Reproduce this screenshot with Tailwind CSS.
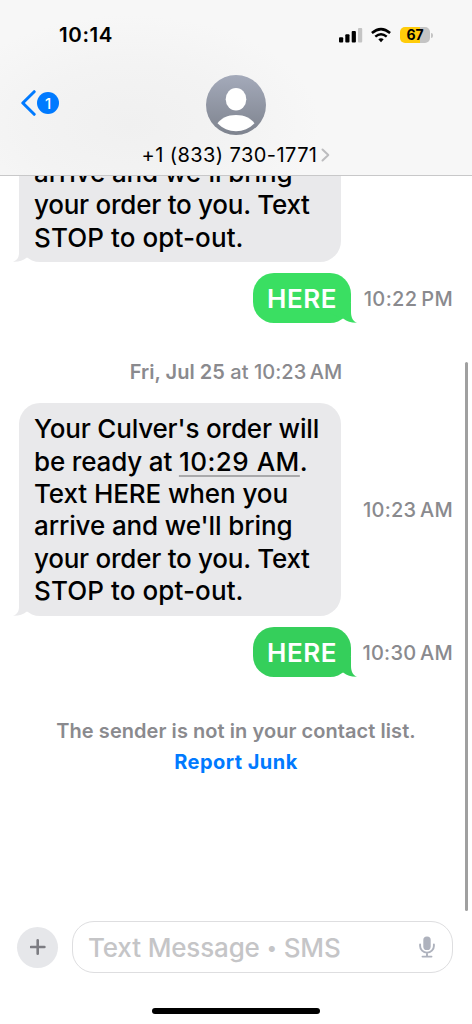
<!DOCTYPE html>
<html lang="en">
<head>
<meta charset="utf-8">
<title>Messages</title>
<script src="https://cdn.jsdelivr.net/npm/@tailwindcss/browser@4"></script>
</head>
<body class="bg-white">
<div class="relative flex h-[1024px] w-[472px] flex-col overflow-hidden bg-white font-['Inter','Liberation_Sans',sans-serif] text-black">

  <header class="flex h-[176px] shrink-0 flex-col border-b border-[#c8c8c9] bg-[radial-gradient(ellipse_190px_110px_at_130px_125px,#f0f0f0_0%,#f3f3f3_55%,#f7f7f7_100%)]">
    <div class="flex h-[70px] shrink-0 items-center justify-between pr-[39px] pl-[59px]">
      <span class="pt-px text-[20.5px] leading-none font-semibold tracking-[0.6px]">10:14</span>
      <div class="flex items-center">
        <svg class="h-4 w-6" viewBox="0 0 24 16"><rect x="0" y="10.3" width="4.2" height="5.2" rx="1"/><rect x="6.3" y="7.3" width="4.2" height="8.2" rx="1"/><rect x="12.7" y="4" width="4.2" height="11.5" rx="1"/><rect x="19" y="1" width="4.2" height="14.5" rx="1" fill="#c4c4c4"/></svg>
        <svg class="ml-2 h-4 w-5" viewBox="0 0 20 16" fill="none" stroke="#000" stroke-width="2.5"><path d="M.9 6Q10-1.8 19.1 6"/><path d="M4.3 9.6Q10 4.8 15.700 9.600"/><path d="M10 15.200 7.300 12.300Q10 10.200 12.700 12.300Z" fill="#000" stroke="none"/></svg>
        <div class="ml-[9px] flex h-4 w-[30px] items-center justify-center rounded-[5px] bg-[linear-gradient(90deg,#ffcc0a_67%,#c4c4c4_67%)] text-[14px] leading-none font-bold">67</div>
        <div class="ml-px h-[5px] w-[2px] rounded-r-full bg-[#c4c4c4]"></div>
      </div>
    </div>
    <div class="grid grid-cols-[1fr_60px_1fr] pt-[5px]">
      <div class="flex h-[56px] items-center pl-[21px]">
        <svg class="h-[26px] w-[15px]" viewBox="0 0 15 26" fill="none" stroke="#007aff" stroke-width="3" stroke-linecap="round" stroke-linejoin="round"><path d="M13.2 1.7 1.8 13 13.2 24.3"/></svg>
        <span class="ml-px flex size-[22px] items-center justify-center rounded-full bg-[#007aff] text-[15px] leading-none font-medium text-white">1</span>
      </div>
      <svg class="size-[60px]" viewBox="0 0 60 60"><defs><linearGradient id="av" x2="0" y2="1"><stop stop-color="#a4aaba"/><stop offset="1" stop-color="#7e838e"/></linearGradient></defs><circle cx="30" cy="30" r="30" fill="url(#av)"/><ellipse cx="30" cy="24.200" rx="10.300" ry="11.300" fill="#fff"/><path d="M11.500 48.300C15 43.500 21.500 40 30 40s15 3.500 18.500 8.300C43.500 53.500 37 56.200 30 56.200s-13.500-2.700-18.500-7.900Z" fill="#fff"/></svg>
    </div>
    <div class="flex h-[40px] items-center justify-center">
      <span class="text-[20px] leading-none tracking-[0.42px] whitespace-nowrap">+1 (833) 730-1771</span>
      <svg class="ml-[4px] h-[14px] w-[9px]" viewBox="0 0 9 14" fill="none" stroke="#bcbcbe" stroke-width="2" stroke-linecap="round" stroke-linejoin="round"><path d="m1.500 1.500 5.800 5.500-5.800 5.500"/></svg>
    </div>
  </header>

  <main class="flex h-[736px] shrink-0 flex-col overflow-hidden">
    <div class="relative -mt-[19px] ml-[19px] w-[321.5px] rounded-b-[21px] bg-[#e9e9eb] px-[15px] pb-[8px] text-[26px] leading-[32.4px] font-medium whitespace-nowrap">
      <svg class="absolute bottom-0 -left-[6px] h-5 w-[28px]" viewBox="0 0 28 20" fill="#e9e9eb"><path d="M6 0V11C6 15.500 4 18.500 0 19.700 5.500 20 10 18.500 13.500 15.700L28 10V0Z"/></svg>
      <div class="relative tracking-[-0.12px]">arrive and we'll bring</div>
      <div class="relative tracking-[-0.25px]">your order to you. Text</div>
      <div class="relative tracking-[0.1px]">STOP to opt-out.</div>
    </div>

    <div class="mt-[11px] flex h-[50px] items-center justify-end pr-[19px]">
      <div class="relative flex h-[50px] w-[98px] items-center justify-center rounded-[21px] bg-[#3adf62] pt-px text-[26px] leading-none font-semibold tracking-[0.5px] text-white">
        <svg class="absolute -right-[6px] bottom-0 h-5 w-[28px]" viewBox="0 0 28 20" fill="#3adf62"><path d="M22 0V9C22 14.500 24 18.500 28 19.800 22.500 20 18 18.500 14.500 15.700L0 10V0Z"/></svg>
        <span class="relative">HERE</span>
      </div>
      <div class="w-[102px] pt-[1px] text-right text-[20px] leading-none font-medium tracking-[0.35px] whitespace-nowrap text-[#8a8a8e]">10:22&#8201;PM</div>
    </div>

    <div class="mt-[37px] text-center text-[20px] leading-[24px] font-medium tracking-[0.04px] whitespace-nowrap text-[#8a8a8e]"><span class="font-semibold">Fri, Jul 25</span> at 10:23&#8201;AM</div>

    <div class="mt-[19px] flex items-center justify-between pr-[19px] pl-[19px]">
      <div class="relative h-[213px] w-[321.5px] rounded-[21px] bg-[#e9e9eb] px-[15px] pt-[10px] text-[26px] leading-[32.400px] font-medium whitespace-nowrap">
        <svg class="absolute bottom-0 -left-[6px] h-5 w-[28px]" viewBox="0 0 28 20" fill="#e9e9eb"><path d="M6 0V11C6 15.500 4 18.500 0 19.700 5.500 20 10 18.500 13.500 15.700L28 10V0Z"/></svg>
        <div class="relative tracking-[-0.17px]">Your Culver's order will</div>
        <div class="relative tracking-[-0.16px]">be ready at <span class="tracking-[0.5px] underline decoration-[#a9a9ab] decoration-2 underline-offset-4">10:29 AM</span>.</div>
        <div class="relative tracking-[-0.1px]">Text HERE when you</div>
        <div class="relative tracking-[-0.12px]">arrive and we'll bring</div>
        <div class="relative tracking-[-0.25px]">your order to you. Text</div>
        <div class="relative tracking-[0.1px]">STOP to opt-out.</div>
      </div>
      <div class="text-[20px] leading-none font-medium tracking-[0.25px] whitespace-nowrap text-[#8a8a8e]">10:23&#8201;AM</div>
    </div>

    <div class="mt-[11px] flex h-[50px] items-center justify-end pr-[19px]">
      <div class="relative flex h-[50px] w-[98px] items-center justify-center rounded-[21px] bg-[#35cf5b] pt-px text-[26px] leading-none font-semibold tracking-[0.5px] text-white">
        <svg class="absolute -right-[6px] bottom-0 h-5 w-[28px]" viewBox="0 0 28 20" fill="#35cf5b"><path d="M22 0V9C22 14.500 24 18.500 28 19.800 22.500 20 18 18.500 14.500 15.700L0 10V0Z"/></svg>
        <span class="relative">HERE</span>
      </div>
      <div class="w-[102px] pt-[1px] text-right text-[20px] leading-none font-medium tracking-[0.25px] whitespace-nowrap text-[#8a8a8e]">10:30&#8201;AM</div>
    </div>

    <div class="mt-[39px] flex flex-col items-center text-[20px] leading-[31px] font-semibold whitespace-nowrap">
      <p class="tracking-[0.06px] text-[#8a8a8e]">The sender is not in your contact list.</p>
      <p class="font-bold tracking-[0.45px] text-[#007aff]">Report Junk</p>
    </div>
  </main>

  <div class="absolute top-[362px] left-[465px] h-[549px] w-[3px] rounded-full bg-[#a0a0a0]"></div>

  <footer class="flex grow flex-col items-center">
    <div class="flex w-full items-center pt-[9px] pr-[19px] pl-[17px]">
      <button class="flex size-[41px] items-center justify-center rounded-full bg-[#e6e7ea]"><svg class="size-4" viewBox="0 0 16 16" stroke="#7c7c82" stroke-width="2.600" stroke-linecap="round"><path d="M7.700 1.300v13.400M1 8h13.400"/></svg></button>
      <div class="ml-[14px] flex h-[52px] grow items-center justify-between rounded-[22px] border border-[#dedee0] pr-[17px] pl-[15px]">
        <span class="flex items-center pt-[2px] text-[26px] leading-none font-medium tracking-[-0.15px] whitespace-nowrap text-[#c5c5c7]">Text Message<span class="mr-[7px] ml-[7px] text-[19px]">•</span>SMS</span>
        <svg class="h-[22px] w-4" viewBox="0 0 16 22" fill="none" stroke="#aeb2bd" stroke-width="1.900" stroke-linecap="round"><rect x="4.300" y=".5" width="7.400" height="13.500" rx="3.600" fill="#aeb2bd" stroke="none"/><path d="M1.100 8.500V10a6.900 6.600 0 0 0 13.800 0V8.500M8 16.800v3.600M3.500 20.600h9"/></svg>
      </div>
    </div>
    <div class="mt-[35px] h-[6px] w-[168px] rounded-full bg-black"></div>
  </footer>
</div>
</body>
</html>
